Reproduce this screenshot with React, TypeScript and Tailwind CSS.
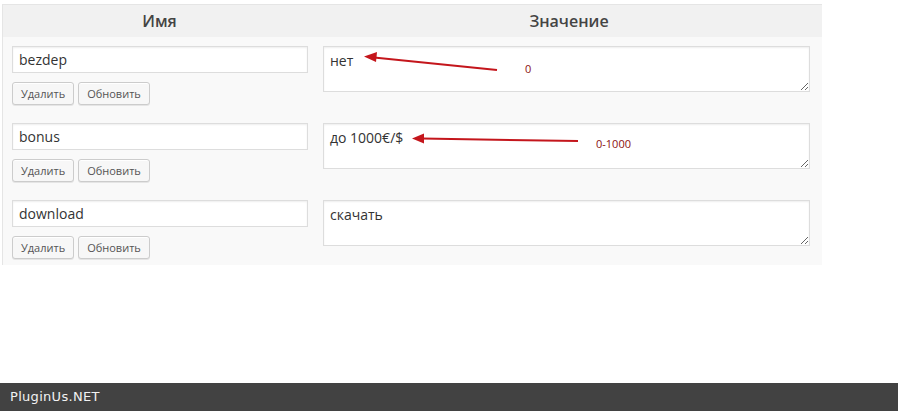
import React from 'react';

const rows = [
    { name: 'bezdep', value: 'нет' },
    { name: 'bonus', value: 'до 1000€/$' },
    { name: 'download', value: 'скачать' },
];

function MetaButton({ label }: { label: string }) {
    return (
        <button className="h-[23px] px-[8px] text-[11px] leading-none text-[#555] bg-[#f7f7f7] border border-[#cccccc] rounded-[3px] shadow-[0_1px_0_#fff_inset,0_1px_0_rgba(0,0,0,0.08)]">
            {label}
        </button>
    );
}

export default function App() {
    return (
        <div className="relative h-[411px] w-[898px] flex flex-col bg-white font-['Open_Sans','Noto_Sans',sans-serif]">
            <div className="ml-[2px] mt-[4px] w-[820px] border-t border-l border-[#e5e5e5]">
                {/* header */}
                <div className="grid grid-cols-[313px_1fr] h-[32px] bg-[#f1f1f1] items-center text-[16px] font-semibold text-[#444]">
                    <div className="text-center">Имя</div>
                    <div className="text-center">Значение</div>
                </div>

                {/* rows */}
                <div className="bg-[#f9f9f9]">
                    {rows.map((row, i) => (
                        <div
                            key={row.name}
                            className={
                                i === rows.length - 1
                                    ? 'grid grid-cols-[313px_1fr] h-[74px] pt-[9px]'
                                    : 'grid grid-cols-[313px_1fr] h-[77px] pt-[9px]'
                            }
                        >
                            <div className="pl-[9px] flex flex-col gap-[9px]">
                                <input
                                    defaultValue={row.name}
                                    className="w-[296px] h-[27px] px-[6px] text-[14px] text-[#333] bg-white border border-[#dddddd] shadow-[inset_0_1px_2px_rgba(0,0,0,0.07)] outline-none"
                                />
                                <div className="flex gap-[4px]">
                                    <MetaButton label="Удалить" />
                                    <MetaButton label="Обновить" />
                                </div>
                            </div>
                            <div className="pl-[7px]">
                                <textarea
                                    defaultValue={row.value}
                                    className="block w-[487px] h-[46px] px-[6px] pt-[3px] text-[14px] text-[#333] bg-white border border-[#dddddd] shadow-[inset_0_1px_2px_rgba(0,0,0,0.07)] outline-none"
                                />
                            </div>
                        </div>
                    ))}
                </div>
            </div>

            <div className="flex-1" />

            <div className="h-[28px] bg-[#424242] flex items-center pl-[10px] text-[13px] tracking-[0.3px] text-[#f2f2f2] font-['DejaVu_Sans',sans-serif]">
                PluginUs.NET
            </div>

            {/* annotation arrows drawn on top of the screenshot */}
            <svg className="absolute inset-0 pointer-events-none" width="898" height="411">
                <line x1="497" y1="70" x2="374" y2="57.5" stroke="#c4161c" strokeWidth="2" />
                <polygon points="364,56.5 377,52 376,62" fill="#c4161c" />
                <line x1="578" y1="141" x2="422" y2="138.5" stroke="#c4161c" strokeWidth="2" />
                <polygon points="412,138.5 424,133.5 424,143.5" fill="#c4161c" />
                <text x="525" y="73" fontSize="11" fill="#8b1010" fontFamily="Open Sans, sans-serif">0</text>
                <text x="596" y="148" fontSize="11" fill="#8b1010" fontFamily="Open Sans, sans-serif">0-1000</text>
            </svg>
        </div>
    );
}
